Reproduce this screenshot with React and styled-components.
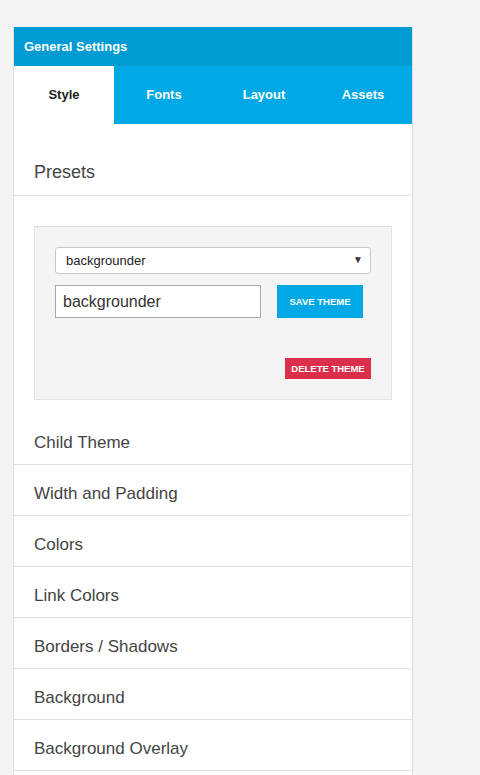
import React from "react";
import styled, { createGlobalStyle } from "styled-components";

const Global = createGlobalStyle`
  body {
    margin: 0;
    background: #f4f4f4;
    font-family: "Liberation Sans", Arial, sans-serif;
  }
`;

const Page = styled.div`
  padding: 27px 0 0 13px;
`;

const Panel = styled.div`
  width: 400px;
  box-sizing: border-box;
  background: #fff;
  border: 1px solid #dedede;
  border-top: none;
  padding-bottom: 20px;
`;

const Header = styled.div`
  height: 39px;
  background: #009bd2;
  color: #fff;
  font-size: 13px;
  font-weight: bold;
  display: flex;
  align-items: center;
  padding-left: 10px;
`;

const Tabs = styled.div`
  display: grid;
  grid-template-columns: repeat(3, 100px) 1fr;
  height: 58px;
  background: #00a8e6;
`;

const Tab = styled.div`
  display: flex;
  align-items: center;
  justify-content: center;
  padding-bottom: 2px;
  font-size: 13px;
  font-weight: bold;
  color: ${(p) => (p.active ? "#222" : "#fff")};
  background: ${(p) => (p.active ? "#fff" : "transparent")};
`;

const SectionTitle = styled.div`
  padding: 37px 20px 12px;
  font-size: 18px;
  line-height: 22px;
  color: #444;
  border-bottom: 1px solid #e3e3e3;
`;

const Content = styled.div`
  padding: 30px 20px 14px;
`;

const Box = styled.div`
  background: #f4f4f4;
  border: 1px solid #e3e3e3;
  padding: 20px;
`;

const SelectWrap = styled.div`
  position: relative;
`;

const Select = styled.select`
  appearance: none;
  width: 100%;
  height: 27px;
  box-sizing: border-box;
  border: 1px solid #c8c8c8;
  border-radius: 3px;
  background: #fff;
  padding: 0 0 0 10px;
  font-family: inherit;
  font-size: 13px;
  color: #222;
  outline: none;
`;

const Arrow = styled.span`
  position: absolute;
  right: 8px;
  top: 7px;
  font-size: 10px;
  color: #333;
  pointer-events: none;
`;

const Row = styled.div`
  display: flex;
  align-items: center;
  gap: 16px;
  margin-top: 11px;
`;

const Input = styled.input`
  width: 206px;
  height: 33px;
  box-sizing: border-box;
  border: 1px solid #aaa;
  padding: 0 7px;
  font-family: inherit;
  font-size: 16px;
  color: #333;
  outline: none;
`;

const Button = styled.button`
  border: none;
  color: #fff;
  font-family: inherit;
  font-weight: bold;
  font-size: 9.5px;
  text-transform: uppercase;
  padding: 0;
  width: ${(p) => p.w}px;
  height: ${(p) => p.h}px;
  background: ${(p) => (p.danger ? "#dc2f4b" : "#00a8e6")};
`;

const Actions = styled.div`
  display: flex;
  justify-content: flex-end;
  margin-top: 40px;
`;

const Item = styled.div`
  padding: 19px 20px 11px;
  font-size: 17px;
  line-height: 20px;
  color: #444;
  border-bottom: 1px solid #e3e3e3;
`;

const items = [
  "Child Theme",
  "Width and Padding",
  "Colors",
  "Link Colors",
  "Borders / Shadows",
  "Background",
  "Background Overlay",
];

export default function App() {
  return (
    <Page>
      <Global />
      <Panel>
        <Header>General Settings</Header>
        <Tabs>
          <Tab active>Style</Tab>
          <Tab>Fonts</Tab>
          <Tab>Layout</Tab>
          <Tab>Assets</Tab>
        </Tabs>
        <SectionTitle>Presets</SectionTitle>
        <Content>
          <Box>
            <SelectWrap>
              <Select defaultValue="backgrounder">
                <option value="backgrounder">backgrounder</option>
              </Select>
              <Arrow>▼</Arrow>
            </SelectWrap>
            <Row>
              <Input defaultValue="backgrounder" />
              <Button w={86} h={33}>Save Theme</Button>
            </Row>
            <Actions>
              <Button danger w={86} h={21}>Delete Theme</Button>
            </Actions>
          </Box>
        </Content>
        {items.map((t) => (
          <Item key={t}>{t}</Item>
        ))}
      </Panel>
    </Page>
  );
}
